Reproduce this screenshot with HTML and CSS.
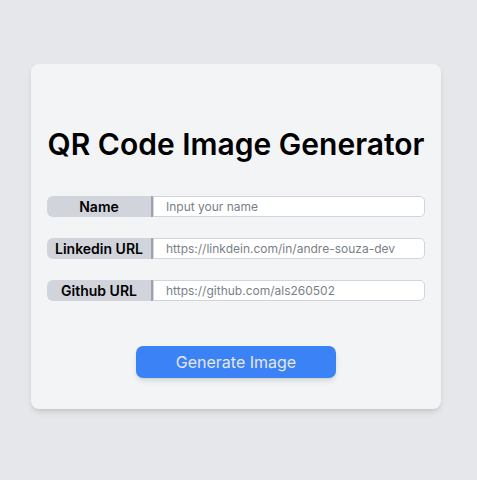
FILE: index.html
```html
<!DOCTYPE html>
<html lang="en">
<head>
<meta charset="utf-8">
<title>QR Code Image Generator</title>
<link rel="stylesheet" href="styles.css">
</head>
<body>
<main class="page">
  <section class="card">
    <h1 class="title">QR Code Image Generator</h1>
    <form class="form">
      <div class="row">
        <label class="label" for="name">Name</label>
        <input class="input" id="name" type="text" placeholder="Input your name">
      </div>
      <div class="row">
        <label class="label" for="linkedin">Linkedin URL</label>
        <input class="input" id="linkedin" type="text" placeholder="https://linkdein.com/in/andre-souza-dev">
      </div>
      <div class="row">
        <label class="label" for="github">Github URL</label>
        <input class="input" id="github" type="text" placeholder="https://github.com/als260502">
      </div>
      <button class="button" type="button">Generate Image</button>
    </form>
  </section>
</main>
</body>
</html>
```

FILE: styles.css
```css
* { box-sizing: border-box; }
html, body { margin: 0; padding: 0; }
body {
  background: #e5e7eb;
  font-family: Inter, "Noto Sans", sans-serif;
  width: 477px;
  height: 480px;
  overflow: hidden;
}
.page {
  padding: 64px 0 0 31px;
}
.card {
  width: 410px;
  height: 345px;
  background: #f3f4f6;
  border-radius: 8px;
  box-shadow: 0 4px 6px -1px rgba(0,0,0,0.1), 0 2px 4px -2px rgba(0,0,0,0.1);
  padding: 62px 16px 0 16px;
}
.title {
  margin: 0;
  font-size: 30px;
  line-height: 36px;
  font-weight: 600;
  text-align: center;
  color: #000;
}
.form {
  margin-top: 34px;
  display: flex;
  flex-direction: column;
  gap: 21px;
}
.row {
  display: flex;
  height: 21px;
}
.label {
  width: 106px;
  flex: none;
  background: #d1d5db;
  border-right: 2px solid #9ca3af;
  border-radius: 6px 0 0 6px;
  font-size: 14px;
  font-weight: 600;
  line-height: 21px;
  text-align: center;
  color: #000;
}
.input {
  flex: 1;
  min-width: 0;
  height: 21px;
  border: 1px solid #d1d5db;
  border-radius: 0 5px 5px 0;
  background: #fff;
  font-family: Inter, "Noto Sans", sans-serif;
  font-size: 12px;
  padding: 0 12px;
  color: #111827;
  outline: none;
}
.input::placeholder { color: #7a7f88; }
.button {
  align-self: center;
  margin-top: 24px;
  width: 200px;
  height: 32px;
  border: none;
  border-radius: 7px;
  background: #3b82f6;
  color: #e5e7eb;
  font-family: Inter, "Noto Sans", sans-serif;
  font-size: 16px;
  box-shadow: 0 4px 6px -1px rgba(0,0,0,0.1), 0 2px 4px -2px rgba(0,0,0,0.1);
  padding: 0;
}
```
